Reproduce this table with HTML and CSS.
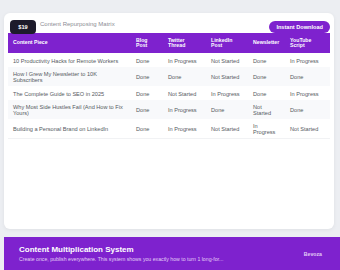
FILE: index.html
```html
<!DOCTYPE html>
<html lang="en">
<head>
<meta charset="utf-8">
<title>Content Repurposing Matrix</title>
<link rel="stylesheet" href="styles.css">
</head>
<body>
<div class="page">
  <section class="card">
    <span class="price">$19</span>
    <header class="card-head">
      <span class="card-title">Content Repurposing Matrix</span>
      <button class="btn">Instant Download</button>
    </header>
    <table class="matrix">
      <colgroup>
        <col class="c1"><col class="c2"><col class="c3"><col class="c4"><col class="c5"><col class="c6">
      </colgroup>
      <thead>
        <tr>
          <th>Content Piece</th><th>Blog Post</th><th>Twitter Thread</th><th>LinkedIn Post</th><th>Newsletter</th><th>YouTube Script</th>
        </tr>
      </thead>
      <tbody>
        <tr><td>10 Productivity Hacks for Remote Workers</td><td>Done</td><td>In Progress</td><td>Not Started</td><td>Done</td><td>In Progress</td></tr>
        <tr class="alt"><td>How I Grew My Newsletter to 10K Subscribers</td><td>Done</td><td>Done</td><td>Not Started</td><td>Done</td><td>Done</td></tr>
        <tr><td>The Complete Guide to SEO in 2025</td><td>Done</td><td>Not Started</td><td>In Progress</td><td>Done</td><td>In Progress</td></tr>
        <tr class="alt"><td>Why Most Side Hustles Fail (And How to Fix Yours)</td><td>Done</td><td>In Progress</td><td>Done</td><td>Not Started</td><td>Done</td></tr>
        <tr class="last"><td>Building a Personal Brand on LinkedIn</td><td>Done</td><td>In Progress</td><td>Not Started</td><td>In Progress</td><td>Not Started</td></tr>
      </tbody>
    </table>
  </section>
  <footer class="banner">
    <div class="banner-text">
      <h2 class="banner-title">Content Multiplication System</h2>
      <p class="banner-sub">Create once, publish everywhere. This system shows you exactly how to turn 1 long-for...</p>
    </div>
    <span class="brand">Bevoza</span>
  </footer>
</div>
</body>
</html>
```

FILE: styles.css
```css
* { box-sizing: border-box; }
html, body { margin: 0; padding: 0; }
body {
  width: 340px;
  height: 270px;
  overflow: hidden;
  background: #eceef2;
  font-family: "Liberation Sans", Arial, sans-serif;
}
.page {
  padding: 13px 0 0 4px;
}
.card {
  position: relative;
  width: 330px;
  height: 216px;
  background: #ffffff;
  border-radius: 6px;
  padding: 0 4px;
  box-shadow: 0 1px 4px rgba(0, 0, 0, 0.06);
}
.price {
  position: absolute;
  left: 6px;
  top: 7px;
  width: 26px;
  height: 14px;
  border-radius: 4px;
  background: #1d1b2b;
  color: #ffffff;
  font-weight: bold;
  font-size: 5.6px;
  line-height: 14px;
  text-align: center;
  z-index: 2;
}
.card-head {
  display: flex;
  justify-content: space-between;
  align-items: flex-start;
  height: 20px;
  padding-left: 32px;
}
.card-title {
  margin-top: 8px;
  font-size: 6px;
  line-height: 7px;
  color: #8a8d94;
}
.btn {
  margin-top: 8px;
  height: 12px;
  padding: 0 7px;
  border: 0;
  border-radius: 6px;
  background: #7e22ce;
  color: #ffffff;
  font-family: inherit;
  font-weight: bold;
  font-size: 5.6px;
  line-height: 12px;
}
.matrix {
  width: 322px;
  border-collapse: collapse;
  table-layout: fixed;
}
.c1 { width: 123px; }
.c2 { width: 32px; }
.c3 { width: 43px; }
.c4 { width: 42px; }
.c5 { width: 37px; }
.c6 { width: 45px; }
.matrix th {
  height: 20px;
  padding: 0 5px;
  background: #7e22ce;
  color: #ffffff;
  font-weight: bold;
  font-size: 5.2px;
  line-height: 5.5px;
  text-align: left;
  vertical-align: middle;
}
.matrix td {
  height: 14px;
  padding: 4px 5px 3px;
  font-size: 5.6px;
  line-height: 6px;
  color: #555a62;
  vertical-align: middle;
}
.matrix tr.alt td {
  background: #f8f9fb;
}
.matrix tr.last td {
  border-bottom: 1px solid #f1f2f4;
}
.banner {
  margin-top: 8px;
  height: 40px;
  background: #7e22ce;
  display: flex;
  justify-content: space-between;
  align-items: flex-start;
  padding: 8px 18px 0 15px;
}
.banner-title {
  margin: 0;
  font-size: 8px;
  line-height: 10px;
  font-weight: bold;
  color: #ffffff;
}
.banner-sub {
  margin: 1px 0 0;
  font-size: 5.2px;
  line-height: 6px;
  color: #e3cdf6;
}
.brand {
  margin-top: 6px;
  font-size: 5.2px;
  font-weight: bold;
  color: #e3cdf6;
}
```
